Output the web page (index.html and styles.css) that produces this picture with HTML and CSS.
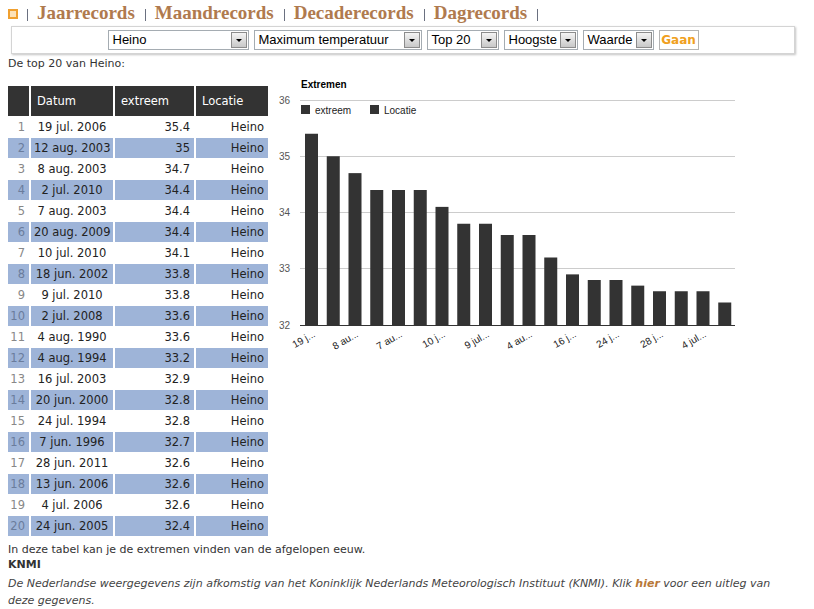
FILE: index.html
```html
<!DOCTYPE html>
<html lang="nl">
<head>
  <meta charset="UTF-8" />
  <title>Extremen Heino</title>
  <link rel="stylesheet" href="styles.css">
</head>
<body>

<div class="nav">
  <span class="nav-icon"></span>
  <span class="sep"></span><a href="#">Jaarrecords</a>
  <span class="sep"></span><a href="#">Maandrecords</a>
  <span class="sep"></span><a href="#">Decaderecords</a>
  <span class="sep"></span><a href="#">Dagrecords</a>
  <span class="sep"></span>
</div>

<div class="filter">
  <div class="select sel-station">Heino<span class="arrow"></span></div>
  <div class="select sel-type">Maximum temperatuur<span class="arrow"></span></div>
  <div class="select sel-top">Top 20<span class="arrow"></span></div>
  <div class="select sel-order">Hoogste<span class="arrow"></span></div>
  <div class="select sel-by">Waarde<span class="arrow"></span></div>
  <div class="btn-go">Gaan</div>
</div>

<p class="intro">De top 20 van Heino:</p>

<div class="content">
  <table class="records">
    <colgroup>
      <col class="c-nr"><col class="c-date"><col class="c-val"><col class="c-loc">
    </colgroup>
    <tr>
      <th class="nr"></th><th>Datum</th><th>extreem</th><th>Locatie</th>
    </tr>
    <tr><td class="nr">1</td><td>19 jul. 2006</td><td class="num">35.4</td><td class="num">Heino</td></tr>
    <tr><td class="nr">2</td><td>12 aug. 2003</td><td class="num">35</td><td class="num">Heino</td></tr>
    <tr><td class="nr">3</td><td>8 aug. 2003</td><td class="num">34.7</td><td class="num">Heino</td></tr>
    <tr><td class="nr">4</td><td>2 jul. 2010</td><td class="num">34.4</td><td class="num">Heino</td></tr>
    <tr><td class="nr">5</td><td>7 aug. 2003</td><td class="num">34.4</td><td class="num">Heino</td></tr>
    <tr><td class="nr">6</td><td>20 aug. 2009</td><td class="num">34.4</td><td class="num">Heino</td></tr>
    <tr><td class="nr">7</td><td>10 jul. 2010</td><td class="num">34.1</td><td class="num">Heino</td></tr>
    <tr><td class="nr">8</td><td>18 jun. 2002</td><td class="num">33.8</td><td class="num">Heino</td></tr>
    <tr><td class="nr">9</td><td>9 jul. 2010</td><td class="num">33.8</td><td class="num">Heino</td></tr>
    <tr><td class="nr">10</td><td>2 jul. 2008</td><td class="num">33.6</td><td class="num">Heino</td></tr>
    <tr><td class="nr">11</td><td>4 aug. 1990</td><td class="num">33.6</td><td class="num">Heino</td></tr>
    <tr><td class="nr">12</td><td>4 aug. 1994</td><td class="num">33.2</td><td class="num">Heino</td></tr>
    <tr><td class="nr">13</td><td>16 jul. 2003</td><td class="num">32.9</td><td class="num">Heino</td></tr>
    <tr><td class="nr">14</td><td>20 jun. 2000</td><td class="num">32.8</td><td class="num">Heino</td></tr>
    <tr><td class="nr">15</td><td>24 jul. 1994</td><td class="num">32.8</td><td class="num">Heino</td></tr>
    <tr><td class="nr">16</td><td>7 jun. 1996</td><td class="num">32.7</td><td class="num">Heino</td></tr>
    <tr><td class="nr">17</td><td>28 jun. 2011</td><td class="num">32.6</td><td class="num">Heino</td></tr>
    <tr><td class="nr">18</td><td>13 jun. 2006</td><td class="num">32.6</td><td class="num">Heino</td></tr>
    <tr><td class="nr">19</td><td>4 jul. 2006</td><td class="num">32.6</td><td class="num">Heino</td></tr>
    <tr><td class="nr">20</td><td>24 jun. 2005</td><td class="num">32.4</td><td class="num">Heino</td></tr>
  </table>

  <svg class="chart" width="480" height="290" viewBox="0 0 480 290">
    <text class="ch-title" x="31" y="12">Extremen</text>

    <!-- grid -->
    <line class="grid" x1="30" y1="24.5" x2="465" y2="24.5"/>
    <line class="grid" x1="30" y1="80.5" x2="465" y2="80.5"/>
    <line class="grid" x1="30" y1="136.5" x2="465" y2="136.5"/>
    <line class="grid" x1="30" y1="192.5" x2="465" y2="192.5"/>
    <text class="ylab" x="20" y="28">36</text>
    <text class="ylab" x="20" y="84">35</text>
    <text class="ylab" x="20" y="140">34</text>
    <text class="ylab" x="20" y="196">33</text>
    <text class="ylab" x="20" y="253">32</text>

    <!-- legend -->
    <rect class="bar" x="31" y="29" width="9" height="9"/>
    <text class="leg" x="45" y="38">extreem</text>
    <rect class="bar" x="100" y="29" width="9" height="9"/>
    <text class="leg" x="114" y="38">Locatie</text>

    <!-- bars -->
    <rect class="bar" x="35" y="57.75" width="13" height="191.25"/>
    <rect class="bar" x="56.75" y="80.25" width="13" height="168.75"/>
    <rect class="bar" x="78.5" y="97.13" width="13" height="151.87"/>
    <rect class="bar" x="100.25" y="114" width="13" height="135"/>
    <rect class="bar" x="122" y="114" width="13" height="135"/>
    <rect class="bar" x="143.75" y="114" width="13" height="135"/>
    <rect class="bar" x="165.5" y="130.88" width="13" height="118.12"/>
    <rect class="bar" x="187.25" y="147.75" width="13" height="101.25"/>
    <rect class="bar" x="209" y="147.75" width="13" height="101.25"/>
    <rect class="bar" x="230.75" y="159" width="13" height="90"/>
    <rect class="bar" x="252.5" y="159" width="13" height="90"/>
    <rect class="bar" x="274.25" y="181.5" width="13" height="67.5"/>
    <rect class="bar" x="296" y="198.38" width="13" height="50.62"/>
    <rect class="bar" x="317.75" y="204" width="13" height="45"/>
    <rect class="bar" x="339.5" y="204" width="13" height="45"/>
    <rect class="bar" x="361.25" y="209.63" width="13" height="39.37"/>
    <rect class="bar" x="383" y="215.25" width="13" height="33.75"/>
    <rect class="bar" x="404.75" y="215.25" width="13" height="33.75"/>
    <rect class="bar" x="426.5" y="215.25" width="13" height="33.75"/>
    <rect class="bar" x="448.25" y="226.5" width="13" height="22.5"/>

    <line class="axis" x1="30" y1="249.5" x2="465" y2="249.5"/>

    <!-- x labels -->
    <text class="xlab" transform="translate(46 260) rotate(-30)">19 j...</text>
    <text class="xlab" transform="translate(89 260) rotate(-30)">8 au...</text>
    <text class="xlab" transform="translate(133 260) rotate(-30)">7 au...</text>
    <text class="xlab" transform="translate(176 260) rotate(-30)">10 j...</text>
    <text class="xlab" transform="translate(220 260) rotate(-30)">9 jul...</text>
    <text class="xlab" transform="translate(263 260) rotate(-30)">4 au...</text>
    <text class="xlab" transform="translate(307 260) rotate(-30)">16 j...</text>
    <text class="xlab" transform="translate(350 260) rotate(-30)">24 j...</text>
    <text class="xlab" transform="translate(394 260) rotate(-30)">28 j...</text>
    <text class="xlab" transform="translate(437 260) rotate(-30)">4 jul...</text>
  </svg>
</div>

<p class="note">In deze tabel kan je de extremen vinden van de afgelopen eeuw.</p>
<h4 class="source">KNMI</h4>
<p class="credits">De Nederlandse weergegevens zijn afkomstig van het Koninklijk Nederlands Meteorologisch Instituut (KNMI). Klik <a href="#">hier</a> voor een uitleg van deze gegevens.</p>

</body>
</html>
```

FILE: styles.css
```css
* { box-sizing: border-box; }
body {
  margin: 0;
  padding: 2px 8px 0;
  font-family: "DejaVu Sans", Verdana, sans-serif;
  font-size: 11px;
  color: #333;
  background: #fff;
}
p { margin: 0; }

/* top navigation */
.nav {
  display: flex;
  align-items: center;
  height: 22px;
  font-family: "Liberation Serif", Georgia, serif;
  font-size: 19px;
  font-weight: bold;
  white-space: nowrap;
}
.nav a {
  color: #b07a4e;
  text-decoration: none;
}
.nav .sep {
  width: 1px;
  height: 12px;
  margin: 3px 9px 0 10px;
  background: #6a7080;
}
.nav-icon {
  width: 10px;
  height: 10px;
  margin-top: 1px;
  border: 2px solid #f0a030;
  background: #fde2b8;
}
.nav-icon + .sep { margin-left: 9px; }

/* filter bar */
.filter {
  display: flex;
  justify-content: center;
  gap: 5px;
  margin: 2px 11px 0 3px;
  padding: 3px;
  border: 1px solid #d4d4d4;
  box-shadow: 1px 1px 2px #c4c4c4;
  background: #fff;
}
.select {
  position: relative;
  height: 20px;
  line-height: 18px;
  padding-left: 4px;
  border: 1px solid #a5acb2;
  font-family: "Liberation Sans", Arial, sans-serif;
  font-size: 13px;
  color: #000;
  background: #fff;
}
.select .arrow {
  position: absolute;
  right: 1px;
  top: 1px;
  width: 16px;
  height: 16px;
  border: 1px solid #8c8c8c;
  background: linear-gradient(#f4f4f4, #c8c8c8);
}
.select .arrow::after {
  content: "";
  position: absolute;
  left: 4px;
  top: 6px;
  border-left: 3px solid transparent;
  border-right: 3px solid transparent;
  border-top: 3px solid #000;
}
.sel-station { width: 141px; }
.sel-type { width: 168px; }
.sel-top { width: 72px; }
.sel-order { width: 74px; }
.sel-by { width: 71px; }
.btn-go {
  width: 40px;
  height: 20px;
  line-height: 18px;
  text-align: center;
  border: 1px solid #b4b4b4;
  color: #f0a020;
  font-weight: bold;
  font-size: 12px;
}

.intro {
  margin: 3px 0 0;
  line-height: 14px;
}

/* table + chart */
.content {
  display: flex;
  align-items: flex-start;
  margin-top: 14px;
}
.records {
  width: 264px;
  margin-left: -2px;
  table-layout: fixed;
  border-collapse: separate;
  border-spacing: 2px 1px;
  font-size: 11.5px;
  white-space: nowrap;
}
.c-nr { width: 21px; }
.c-date { width: 82px; }
.c-val { width: 79px; }
.c-loc { width: 72px; }
.records th {
  height: 30px;
  padding: 0 6px;
  background: #333;
  color: #fff;
  font-weight: normal;
  text-align: left;
}
.records td {
  height: 20px;
  padding: 0 3px;
  text-align: center;
  color: #222;
  background: #fff;
}
.records tr:nth-child(odd) td { background: #9eb4d8; }
.records td.nr {
  padding: 0 4px 0 0;
  text-align: right;
  color: #888;
}
.records tr:nth-child(odd) td.nr { color: #6a7c9c; }
.records td.num { text-align: right; padding-right: 4px; }

.chart {
  margin-top: -9px;
  font-family: "Liberation Sans", Arial, sans-serif;
}
.ch-title { font-size: 10px; font-weight: bold; fill: #000; }
.grid { stroke: #ccc; stroke-width: 1; }
.axis { stroke: #333; stroke-width: 1; }
.bar { fill: #333; }
.ylab { font-size: 10px; fill: #555; text-anchor: end; }
.leg { font-size: 10px; fill: #222; }
.xlab { font-size: 10px; fill: #222; text-anchor: end; }

/* footer text */
.note {
  margin-top: 6px;
  line-height: 14px;
}
.source {
  margin: 1px 0 0;
  font-size: 11px;
  line-height: 14px;
}
.credits {
  margin-top: 3px;
  padding-right: 14px;
  line-height: 17px;
  font-style: italic;
  color: #444;
}
.credits a {
  color: #b87838;
  font-weight: bold;
  text-decoration: none;
}
```
